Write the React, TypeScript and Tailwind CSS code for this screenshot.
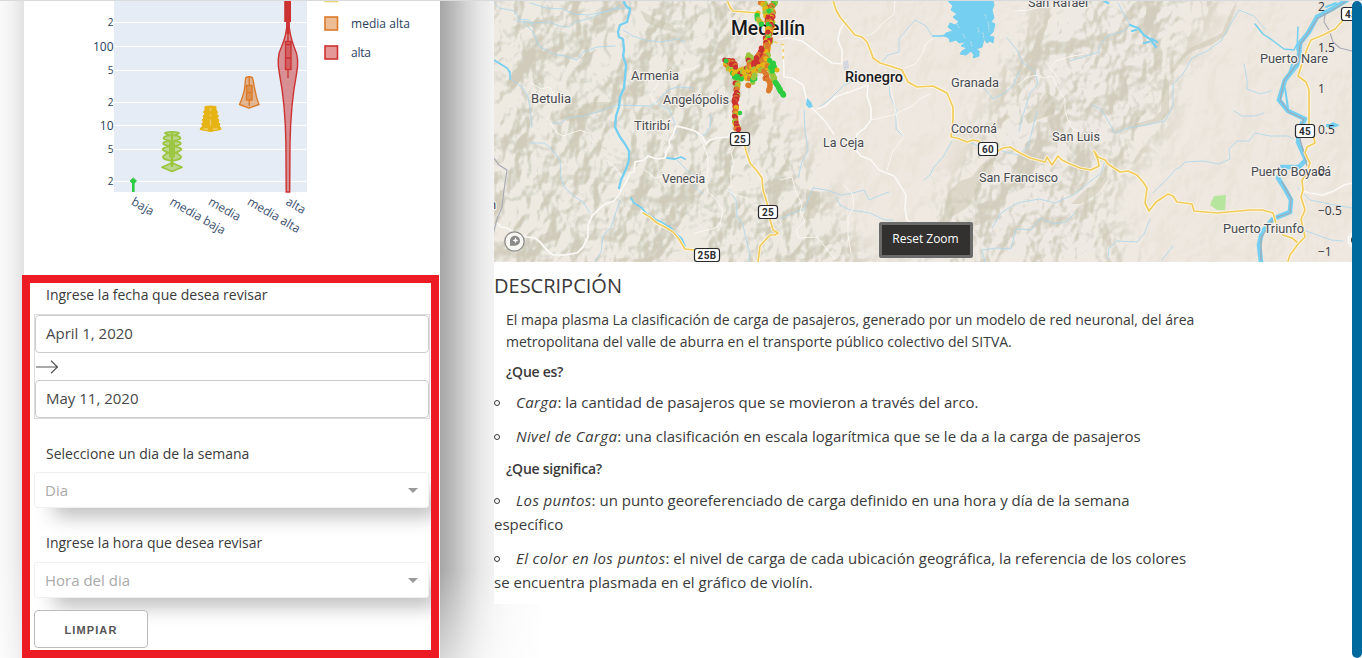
import React from "react";

const PALETTE = ["#2ecc40", "#9bc53d", "#e7b416", "#db7b2b", "#cc3232"];

function random(seed: number) {
  let s = seed;
  return () => {
    s = (s * 16807) % 2147483647;
    return s / 2147483647;
  };
}

type Stop = { x: number; y: number; color: string; r: number };

function scatter(path: number[][], spread: number, step: number, weights: number[], seed: number): Stop[] {
  const next = random(seed * 7919);
  next();
  const out: Stop[] = [];
  for (let i = 0; i < path.length - 1; i++) {
    const [x0, y0] = path[i];
    const [x1, y1] = path[i + 1];
    const n = Math.max(1, Math.round(Math.hypot(x1 - x0, y1 - y0) / step));
    for (let k = 0; k < n; k++) {
      const t = k / n;
      out.push({
        x: x0 + (x1 - x0) * t + (next() - 0.5) * spread,
        y: y0 + (y1 - y0) * t + (next() - 0.5) * spread,
        color: PALETTE[weights[Math.floor(next() * weights.length)]],
        r: 2.6,
      });
    }
  }
  return out;
}

const STOPS: Stop[] = [
  ...scatter([[763, 1], [768, 10], [770, 24], [768, 42], [764, 55], [757, 66]], 6, 0.9, [2, 4, 3, 2, 1], 31),
  ...scatter([[774, 1], [771, 16], [769, 34], [767, 48]], 4, 0.9, [1, 3, 0, 4, 2], 87),
  ...scatter([[757, 14], [757, 19], [763, 25]], 2, 1.5, [1, 2, 0], 91),
  ...scatter([[768, 45], [767, 56], [760, 66]], 5, 0.9, [3, 2, 3, 1], 51),
  ...scatter([[762, 49], [754, 64]], 2, 1.2, [4, 4, 3], 11),
  ...scatter([[728, 62], [733, 69], [738, 76], [749, 76], [757, 67]], 6, 0.5, [2, 1, 3, 0, 2], 71),
  ...scatter([[726, 60], [731, 61], [736, 67]], 3, 0.8, [4, 4, 4, 3], 65),
  ...scatter([[739, 72], [746, 70], [752, 70]], 5, 0.7, [2, 2, 1, 4], 66),
  ...scatter([[749, 56], [750, 65], [758, 65], [768, 68]], 5, 0.7, [1, 2, 3, 4], 23),
  ...scatter([[753, 72], [763, 68], [772, 65]], 5, 0.7, [3, 2, 1, 2], 35),
  ...scatter([[736, 80], [737, 91], [735, 101], [736, 113], [736, 122], [738, 130]], 3, 0.9, [3, 2, 4, 3, 4, 1], 18),
  ...scatter([[765, 72], [766, 78], [770, 83]], 3, 1.2, [3, 3, 4], 88),
  ...scatter([[770, 84], [769, 92]], 1, 1.4, [3], 89),
  ...scatter([[754, 81], [754, 74]], 3, 1.2, [0, 0, 1], 14),
  ...scatter([[749, 86], [746, 84]], 1, 1.5, [3, 3], 8),
  ...scatter([[770, 69], [775, 82]], 2, 1.3, [1], 12),
  ...scatter([[771, 62], [774, 70]], 5, 0.8, [0], 5),
  ...scatter([[775, 82], [784, 96]], 1, 1, [0], 6),
  { x: 777, y: 70, color: "#e7b416", r: 2.5 },
  { x: 737, y: 77, color: "#2ecc40", r: 3.2 },
  { x: 726, y: 61, color: "#2ecc40", r: 2.4 },
  { x: 740, y: 113, color: "#2ecc40", r: 2.2 },
  { x: 769, y: 11, color: "#2ecc40", r: 2.4 },
  { x: 768, y: 17, color: "#cc3232", r: 2.4 },
  { x: 768, y: 32, color: "#cc3232", r: 2.4 },
];

const TOWNS: [string, number, number, number][] = [
  ["Armenia", 631, 80, 48],
  ["Betulia", 531, 103, 40],
  ["Angelópolis", 663, 104, 66],
  ["Titiribí", 634, 130, 36],
  ["Venecia", 662, 183, 43],
  ["La Ceja", 823, 147, 41],
  ["Granada", 951, 87, 48],
  ["Cocorná", 951, 133, 46],
  ["San Francisco", 979, 182, 79],
  ["San Luis", 1052, 141, 48],
  ["San Rafael", 1028, 7, 60],
  ["Puerto Nare", 1260, 63, 68],
  ["Puerto Boyacá", 1251, 176, 80],
  ["Puerto Triunfo", 1223, 233, 81],
];

const SHIELDS: [string, number, number, number][] = [
  ["25", 730, 132, 20],
  ["25", 758, 205, 20],
  ["25B", 694, 248, 26],
  ["60", 978, 142, 20],
  ["45", 1295, 124, 20],
  ["45", 1341, 7, 20],
];

const AXIS: [string, number][] = [
  ["2", 11],
  ["1.5", 52],
  ["1", 93],
  ["0.5", 134],
  ["0", 175],
  ["−0.5", 215],
  ["−1", 256],
];

function Road({ d, main = false }: { d: string; main?: boolean }) {
  return (
    <>
      <path d={d} stroke={main ? "#fff8e6" : "#f1ece5"} strokeWidth={main ? 3.2 : 2} />
      <path d={d} stroke={main ? "#f1cc5c" : "#fdfcfa"} strokeWidth={main ? 1.7 : 1.2} />
    </>
  );
}

const MINOR_ROADS = [
  "M497 223l4 4 6 1 6 4 14 5 8 1 5 4 7 8 6 5 12 0 12-2 6-6 5-10 0-12 4-9 7-7 6-5 9-3 6-8",
  "M620 192l6-10 4-9 4-1 1-10 9-2 4-4 9 3 8-1 2-8 3-3 -1-6 4-6 3-9 9 2 10 3 7 5 4 8 4-4 6-2 12-1 4-6 8-1",
  "M783 44l1 33 8 1 11 7 4 16 5 7 12 12 10 14",
  "M780 39l10-1 12 3 20 15 10 7 10 1 0-14 -4-10 2-10 6-10",
  "M817 109l8-3 10-9 20-7 13-5",
  "M868 85l-1 11 4 12 0 12 -6 8 -8 6 -3 14 7 8 10 4 8 10 10 4 5 2 6 9 6 10 -1 13 2 12 10 6 10 7",
  "M1301 190l8 3 14 2 11-4 10-6 8-2",
];

const TRACKS = [
  "M697 132l6 12 5 13 0 14 -2 10 2 11 8 7 7 12 -3 13 -5 4 -12 3 -8 2",
  "M547 118l5 7 5 8 6 3 9-3 8-3 8 3 5 10",
  "M606 160l8 6 6 8 5 5",
  "M735 145l-4 8 3 10 -3 10 0 14 -4 3 8 5 12 3",
  "M871 120l14-3 12-3 4-3 10-4 9-8 10-5",
  "M905 68l10-4 8-11 2-8 7-6 9-4 18 7",
  "M885 70l5 15 5 23 4 20 5 9 -11 14 -6 19",
  "M867 36l8-4 8-9 11-9 1-13",
  "M1018 85l8-7 10-3 8 3 8-2 4 8 5 10 4 5 0 12 3 9 4 8 8 4",
  "M1060 80l-10-12 6-7 12-4 16-3",
  "M780 180l12-3 4 15 6 12 -2 8 5 9 -9 9 3 8 18-1 8 10 10 12",
  "M843 185l9 8 2 14 -6 10 0 18 3 18",
  "M1015 11l14-1 12-3 7-5",
  "M645 170l10 8 8-2",
  "M531 83l10 6 8-2 6 9",
  "M659 78l-2 8 -7 8 6 10",
  "M676 75l8-5 8-1 8-4",
];

const STREAMS = [
  "M494 2l5 6 16 3 4 8 10 1 5 8",
  "M516 21l20 2 12-1 12 4 9 1 6-5 16-4 12-6 12-3 16-1",
  "M530 3l16 5 17 1 11 5 14 1 20-4 12-5",
  "M523 22l10 10 6 14 14 8 12 2 12 4 6-8 14-5 18-1",
  "M623 30l10 6 12 4 15 2 18-3 7 3",
  "M494 60l13 8 5 12 11 8 5 9 2 11 2 19",
  "M553 123l8 0 6-5 16-2 18-5 16-6 34 1 6-4 11-12 9-3 16 1",
  "M530 143l14 0 7 5 9 12 1 18 4 10 10 9 8 5 7 11",
  "M659 105l10 4 6 15 1 9",
  "M711 115l-1 12 -5 8 -8 0",
  "M620 200l-5 15 -4 12 -8 9 -2 16 -6 9",
  "M677 160l10 10 10 8 -3 8 9 8",
  "M729 190l7 10 1 17 6 8 3 14 4 15 -2 8",
  "M817 109l12-9 15-15 10-4",
  "M881 63l7-8 11-3 0-13 9-11 7-8 11 6 7 11 14-1",
  "M888 72l2 24 6 13 0 20 8 8",
  "M804 110l1 20 3 20 -6 12 -4 16",
  "M780 219l17-8 7-1 9-22 14 2 14 5 12-2 11-3 5 10 12-5 8-3",
  "M836 197l4 8 10 5 20 3 15 7 9 0",
  "M973 85l11 3 9 11 10-5 10-8 6-15",
  "M952 135l24 10 22 5 20 5 10-8 5-20 4-16",
  "M952 141l-9 16 -9 10 -4 8 -6 5",
  "M1007 38l10 12 6 13 12 8 3 13 -8 9 -7 22 -4 16",
  "M1105 161l-4 12 -10 8 -16 13 -20 9 -16-4 -22 4 -16 10 -9 15",
  "M1115 133l13-5 17-3 20-4 8-15 0-22 10-10 9-16 15-7 14-10 9-16 9-15 15 6 11 13",
  "M1178 169l7-7 18-1 16 3 11-5 -1-10 8-8 12 0 6-8 15 3 18 0 5 3",
  "M1244 64l3 16 0 9 13 5 11-3",
  "M1234 111l8 5 12 0 10-3",
  "M1150 219l-6 15 -7 8 -20-1 -8 7 -1 11",
  "M1153 193l15-15 9-10",
  "M985 262l-3-12 14-2 15 1 5-20 15 1 9-12 14 6 12-2 10-10",
  "M1118 3l12 22 -6 6 -17 5 -8 11 0 5 -29 9",
  "M1298 188l12 12 20 4 22 4",
  "M1300 229l12 4 19 7 12 1",
  "M1162 260l11-14",
  "M1092 105l9 4 10 17 3 7",
];

function RegionMap() {
  return (
    <svg className="block shrink-0" width="858" height="262" viewBox="494 0 858 262" fill="none" strokeLinejoin="round" strokeLinecap="round">
      <defs>
        <filter id="relief" x="0" y="0" width="100%" height="100%" colorInterpolationFilters="sRGB">
          <feTurbulence type="fractalNoise" baseFrequency="0.026 0.02" numOctaves="4" seed="14" result="n" />
          <feDiffuseLighting in="n" surfaceScale="19" diffuseConstant="1.12" lightingColor="#ffffff">
            <feDistantLight azimuth="225" elevation="54" />
          </feDiffuseLighting>
          <feComponentTransfer>
            <feFuncR type="discrete" tableValues="0.80 0.80 0.80 0.81 0.82 0.835 0.85 0.875 0.90 0.935" />
            <feFuncG type="discrete" tableValues="0.78 0.78 0.78 0.79 0.80 0.82 0.838 0.865 0.888 0.915" />
            <feFuncB type="discrete" tableValues="0.71 0.71 0.71 0.72 0.74 0.76 0.79 0.825 0.85 0.885" />
          </feComponentTransfer>
        </filter>
        <filter id="soft" x="-20%" y="-20%" width="140%" height="140%">
          <feGaussianBlur stdDeviation="12" />
        </filter>
        <mask id="hills" maskUnits="userSpaceOnUse" x="494" y="0" width="858" height="262">
          <rect x="494" y="0" width="858" height="262" fill="#202020" />
          <g filter="url(#soft)">
            <path d="M480-20H760L740 60L790 120L830 200L880 280H480Z" fill="#e0e0e0" />
            <path d="M900 280L950 190L985 120L1010 50L1060-20H1235L1180 60L1165 130L1110 200L1140 280Z" fill="#d0d0d0" />
          </g>
        </mask>
      </defs>
      <rect x="494" y="0" width="858" height="262" fill="#efe9e1" />
      <g mask="url(#hills)">
        <rect x="494" y="0" width="858" height="262" filter="url(#relief)" />
      </g>

      <g fill="#c9c5b0" fillOpacity="0.5">
        <path d="M1165 72l4 12 0 28 -6 8 -14 5 -16 3 -12 6 14-10 18-5 8-8 1-20z" />
        <path d="M1168 75l8-12 12-14 20-9 14-7 9-22 6-9 -4 14 -6 18 -14 10 -20 7 -10 8 -8 12z" />
        <path d="M982 164l14-7 -6 18 -12 14 -10 18 -16 10 -10 16 2-22 4-18 12-12 12-4z" />
        <path d="M806 190l14 2 0 14 -6 12 -12 2 4-14z" />
        <path d="M1106 165l2 14 -10 14 -18 11 -9 0 12-12 12-8z" />
        <path d="M1046 92l12 8 -4 14 -12 4 -14 6 -4-8 12-10z" />
        <path d="M560 118l16-8 16-8 20 0 -4 8 -18 4 -20 8z" />
        <path d="M640 10l14 8 16 6 8 8 -14-2 -18-8z" />
      </g>

      <g stroke="#a9d7ee" strokeWidth="0.8">
        {STREAMS.map((d) => (
          <path key={d} d={d} />
        ))}
      </g>
      <g stroke="#faf7f3" strokeWidth="0.9">
        {TRACKS.map((d) => (
          <path key={d} d={d} />
        ))}
      </g>
      {MINOR_ROADS.map((d) => (
        <Road key={d} d={d} />
      ))}

      <g stroke="#75cff0">
        <path strokeWidth="2.3" d="M624 2l2 4 4 3 -1 5 -2 8 -7 3 -2 7 1 5 4 2 1 11 -1 6 3 9 -1 13 -1 10 -4 9 -1 10 -3 9 -1 11 5 10 5 7 4 7 0 9 -3 9 -5 11 -2 8" />
        <path strokeWidth="1.8" d="M631 198l3 5 8 5 4 5 9 6 8 4 5 4M669 226l5 6 8 7 3 7M667 158l8 1 6-2 4 2" />
        <path strokeWidth="1.5" d="M494 60l13 8 3 4 0 7M933 36l7 0 8-1M1255 24l8 10 9 6 12 9 10 1 3-6M1298 27l-1 23" />
        <path strokeWidth="2.2" d="M1130 25l8 3 6 7 6 4 6 8M1136 30l-4 1M1149 42l-5 1M1152 39l5 3M1104 1l4 2" />
      </g>
      <path
        d="M948 1L953 6 951 10 957 14 953 17 959 22 955 25 950 23 948 27 953 31 946 33 944 36 949 38 950 42 956 40 959 43 966 42 961 46 967 48 962 51 960 54 966 55 971 51 974 55 973 58 979 56 979 51 976 49 982 47 984 39 987 43 990 41 993 43 994 37 989 36 993 32 995 24 991 22 994 18 992 10 994 5 993 1Z"
        fill="#75cff0"
        stroke="#75cff0"
        strokeWidth="1"
      />
      <path d="M957 24l3 5M983 33l1 6M988 22l1 9M971 42l1 4M963 34l2 4M978 28l1 5M985 15l1 3" stroke="#efe9e1" strokeWidth="0.7" strokeDasharray="1 2" />
      <path d="M807 98l4 4 2 5 -4 1 -3-3z" fill="#75cff0" />
      <path d="M1326 124l4 0 3-2 4 2 3 1 -4 2 -5 1 -5-1z" fill="#75cff0" />
      <path d="M843 62l5-2 1 8 -5 3z" fill="#d4d6e0" />
      <path d="M1214 196L1226 195 1225 210 1217 210 1210 205Z" fill="#b6e59e" />

      <path d="M1347 0L1332 9 1317 17 1309 32 1300 43 1299 55 1297 65 1285 80 1279 100 1288 111 1305 119 1300 128 1298 142 1306 160 1299 167 1282 167 1278 178 1285 189 1291 200 1290 212 1273 219 1262 232 1259 245 1261 262" stroke="#75cff0" strokeWidth="4.6" strokeLinejoin="miter" />
      <path d="M1336 3l-10 4M1312 24l-5 8M1285 88l3 20M1294 58l-5 16M1301 122l-3 10" stroke="#75cff0" strokeWidth="2" />
      <path d="M1345 2L1333 10 1318 18 1306 36 1300 45 1298 62 1284 81 1280 100 1289 112 1304 119 1298 132 1303 150 1307 166M1282 182l9 16 -1 15 -16 5 -13 20 0 22" stroke="#a2a8b4" strokeWidth="1.2" />
      <path d="M1325 14l-1 8 5 8 4 12 7 6 12 3M494 158l5 7 8 5 -3 20 -2 17 -5 12 -3 12" stroke="#a9a9b5" strokeWidth="1.1" />

      <Road main d="M833 0L836 10 840 17 855 35 862 37 867 42 871 52 873 58 880 63 890 66 902 70 908 82 917 87 933 86 947 93 953 107 953 120 951 137 957 138 967 142 973 140 979 141 985 149 998 151 1003 148 1010 147 1020 153 1030 158 1045 162 1047 157 1052 165 1058 156 1062 160 1068 163 1080 168 1091 170 1099 166 1098 160 1094 151 1098 157 1105 160 1108 164 1120 172 1128 171 1137 175 1143 182 1147 188 1145 203 1149 211 1156 202 1162 198 1168 194 1173 196 1177 202 1192 204 1194 211 1217 213 1250 210 1262 210 1273 213 1277 227 1283 235 1292 238 1298 243" />
      <Road main d="M1345 18L1335 29 1323 35 1311 40 1307 49 1298 76 1306 82 1309 90 1309 123 1313 134 1315 143 1307 147 1305 153 1310 163 1306 175 1302 180 1303 190 1301 197 1305 210 1301 219 1305 237 1298 244 1290 255 1288 261" />
      <Road main d="M727 0L730 7 733 11 745 12 757 13" />
      <Road main d="M744 140L746 151 750 163 757 171 762 178 763 190 767 203 768 212 773 230 778 233 775 235 770 235 760 246 758 262" />
      <Road main d="M643 213L650 217 657 223 665 227 673 232 679 239 685 249 694 250" />
      <path d="M775 42l9 3 -1 8 0 10" stroke="#f1cc5c" strokeDasharray="2 5" strokeWidth="1.5" />

      <g fill="#484b52" stroke="#f6f2ec" strokeWidth="2.4" paintOrder="stroke" fontFamily="Roboto, 'Liberation Sans', sans-serif" fontSize="13">
        {TOWNS.map(([name, x, y, w]) => (
          <text key={name} x={x} y={y} textLength={w} lengthAdjust="spacingAndGlyphs">
            {name}
          </text>
        ))}
        <text x="489" y="209">n</text>
        <g fill="#17191d" fontWeight="500">
          <text x="845" y="82" fontSize="14" textLength="58" lengthAdjust="spacingAndGlyphs">Rionegro</text>
          <text x="731" y="35" fontSize="20" textLength="74" lengthAdjust="spacingAndGlyphs">Medellín</text>
        </g>
      </g>

      {SHIELDS.map(([label, x, y, w]) => (
        <g key={`${x}-${y}`}>
          <rect x={x + 0.5} y={y + 0.5} width={w - 1} height="13" rx="2.5" fill="#fff" stroke="#26282d" strokeWidth="1.2" />
          <text x={x + w / 2} y={y + 10.6} textAnchor="middle" fontFamily="Roboto, sans-serif" fontWeight="700" fontSize="10" letterSpacing="0.3" fill="#2c2e33">
            {label}
          </text>
        </g>
      ))}

      {STOPS.map((p, i) => (
        <circle key={i} cx={p.x} cy={p.y} r={p.r} fill={p.color} />
      ))}

      <g fill="#33373d" fontFamily="'Open Sans', sans-serif" fontSize="12">
        {AXIS.map(([t, y]) => (
          <text key={t} x="1318" y={y}>
            {t}
          </text>
        ))}
      </g>

      <circle cx="514.5" cy="241.5" r="9.7" fill="#f7f6f3" stroke="#8c8c8a" strokeWidth="1.3" />
      <path d="M510 245.800V240.500a5 5 0 1 1 5 5.300z" fill="#8a8a88" />
      <path d="M515.500 237.500l.9 2 2 .9 -2 .9 -.9 2 -.9-2 -2-.9 2-.9z" fill="#fff" />
      <circle cx="1356" cy="240" r="9" fill="#f8f6f3" />
      <circle cx="1355" cy="240" r="4" fill="#333" />
    </svg>
  );
}

const GRID: [number, string, boolean][] = [
  [22.5, "2", false],
  [46.5, "100", true],
  [70.5, "5", false],
  [102.5, "2", false],
  [125.5, "10", true],
  [149.5, "5", false],
  [181.5, "2", false],
];

const CATEGORIES: [string, number][] = [
  ["baja", 130.5],
  ["media baja", 169],
  ["media", 207.5],
  ["media alta", 246.5],
  ["alta", 285],
];

function ViolinChart() {
  return (
    <svg className="block shrink-0" width="416" height="275" viewBox="24 0 416 275" fontFamily="'Open Sans', sans-serif">
      <rect x="114" y="0" width="193" height="192" fill="#e5ecf6" />
      {GRID.map(([y, label, major]) => (
        <g key={y}>
          <path d={`M114 ${y}H307`} stroke="#fff" />
          <text x="113.5" y={major ? y + 4.5 : y + 3.5} textAnchor="end" fontSize={major ? 12 : 10} fill="#2a3f5f">
            {label}
          </text>
        </g>
      ))}
      {CATEGORIES.map(([name, x]) => (
        <text key={name} x={x} y="204" transform={`rotate(30 ${x} 204)`} fontSize="12" fill="#3d5170">
          {name}
        </text>
      ))}

      <path d="M133.300 181V192" stroke="#2ecc40" strokeWidth="2.6" />
      <path d="M133.300 178l3.200 3 -3.200 3 -3.200-3z" fill="#2ecc40" stroke="#2ecc40" strokeWidth="1" strokeLinejoin="round" />

      <g stroke="#9bc53d" strokeWidth="1.7" strokeLinejoin="round" fill="#9bc53d" fillOpacity="0.55">
        <path d="M165 132.800Q172 130.800 179 132.800Q179.500 134 174 135.300Q181 136.500 180.500 138.200Q180 139.800 174 140.800Q181.500 142 180.800 143.500Q180 145 174 146.200Q182 148 181.300 149.500Q180 151.500 175 152.800Q182 155.500 181 157.500Q180 159.500 172.500 160.800L172.500 163 182 167.300 172 171.500 162 167.300 171.500 163 171.500 160.800Q164 159.500 163 157.500Q162 155.500 169 152.800Q164 151.500 162.700 149.500Q162 148 170 146.200Q164 145 163.200 143.500Q162.500 142 170 140.800Q164 139.800 163.500 138.200Q163 136.500 170 135.300Q164.500 134 165 132.800Z" />
        <path d="M172 133V167" strokeWidth="2.4" />
        <path d="M169.500 142.500h5V157h-5z" fillOpacity="0.8" strokeWidth="1" />
      </g>

      <path d="M205 106.500Q210 105.500 216 106.500L216 110 217.500 112 216.700 114 218.500 116 217.300 118 219 120 218 122 220 124 219 126 220.500 127.500 221 129.500 210.500 131.500 200 129.500 201 127.500 203 126 201.500 124 203.500 122 202 120 204 118 203 116 205 114 203.500 112 205 110Z" fill="#e7b416" stroke="#e7b416" strokeLinejoin="round" />
      <path d="M210.500 108v3M210.500 114.500v2M210.500 119.500v6M203.500 129h4.500M213 129h4.500" stroke="#edcc66" strokeWidth="1.4" />

      <g stroke="#db7b2b" strokeWidth="1.4" strokeLinejoin="round" fill="#db7b2b" fillOpacity="0.5">
        <path d="M246 77.500Q249 76 252.300 77.500C253.500 80 253.500 84 255 90C256 96 257.500 101 259 104.500L249 108.200 239.500 104.500C241 101 243.500 95 244.500 89C245.500 83 245 80 246 77.500Z" />
        <path d="M246.500 85.500h5.500V100h-5.500zM246.500 92.500h5.500M249.300 77v8.500M249.300 100v6" fillOpacity="0.6" />
      </g>

      <g stroke="#cc3232" strokeWidth="1.4" fill="#cc3232">
        <path d="M287 22C287 32 285 39 281 48C277 56 277.500 64 279.500 74C283 92 285.500 112 285.900 144L286.200 192H289.700L290 144C290.500 112 293 92 296.500 74C298.500 64 298.500 56 294.500 48C291 39 289 32 289 22Z" fillOpacity="0.5" />
        <path d="M288 22V41M288 70V78" />
        <path d="M285.500 41.500h5.500V69.500h-5.500zM285.500 44.500h5.500M285.500 58h5.500" fillOpacity="0.5" />
        <rect x="284.2" y="0" width="6.8" height="22" stroke="none" />
        <rect x="286.5" y="20" width="3" height="14" stroke="none" />
      </g>

      <g strokeWidth="1.6" fontSize="12">
        <rect x="325" y="-11.5" width="12.5" height="13" fill="#f3da8a" stroke="#e7d680" />
        <rect x="325" y="17" width="12.5" height="13" fill="#edbd95" stroke="#db7b2b" />
        <rect x="325" y="46" width="12.5" height="13" fill="#e59898" stroke="#cc3232" />
      </g>
      <g fontSize="12" fill="#2a3f5f">
        <text x="351" y="28" textLength="59">media alta</text>
        <text x="351" y="57" textLength="20">alta</text>
      </g>
    </svg>
  );
}

function Dropdown({ placeholder }: { placeholder: string }) {
  return (
    <div className="ml-1 flex h-9 w-[395px] items-center justify-between rounded-[3px] border border-[#f0f0f0] bg-white pr-[10px] pl-[10px] shadow-[14px_14px_20px_-6px_rgba(0,0,0,0.28)]">
      <span className="pt-px text-[15px] text-[#aaaaaa]">{placeholder}</span>
      <span className="mt-px h-0 w-0 border-x-[5px] border-t-[5px] border-x-transparent border-t-[#999]" />
    </div>
  );
}

function Filters() {
  return (
    <section className="-ml-[2px] h-[383px] w-[417px] shrink-0 overflow-hidden border-8 border-[#ed1c24] bg-white text-sm text-[#3a3a3a]">
      <div className="flex h-[31px] items-center pb-[7px] pl-4">
        <span>Ingrese la fecha que desea revisar</span>
      </div>
      <div className="ml-1 flex h-[105px] w-[396px] flex-col justify-between border border-[#dcdcdc] text-[15px] text-[#484848]">
        <div className="flex h-[38px] items-center rounded border border-[#cacccd] pl-[10px]">April 1, 2020</div>
        <svg className="mt-px block" width="24" height="16" viewBox="0 0 24 16" fill="none" stroke="#555" strokeWidth="1.2">
          <path d="M1 8H22.500M16 1.800L22.500 8 16 14.200" />
        </svg>
        <div className="flex h-[38px] items-center rounded border border-[#cacccd] pl-[10px]">May 11, 2020</div>
      </div>
      <div className="flex h-[53px] items-center pt-[17px] pl-4">
        <span>Seleccione un dia de la semana</span>
      </div>
      <Dropdown placeholder="Dia" />
      <div className="flex h-[54px] items-center pt-[16px] pl-4">
        <span className="relative">Ingrese la hora que desea revisar</span>
      </div>
      <Dropdown placeholder="Hora del dia" />
      <button className="relative mt-3 ml-1 flex h-[38px] w-[114px] items-center justify-center rounded border border-[#bbb] bg-white pt-[3px] font-['Liberation_Sans',sans-serif] text-[11px] font-semibold tracking-[1.1px] text-[#555]">
        LIMPIAR
      </button>
    </section>
  );
}

function Item({ term, children }: { term: string; children: React.ReactNode }) {
  return (
    <li className="mb-[10px] text-[15px] leading-6">
      <span className="inline-flex w-[22px] items-center align-middle">
        <span className="-mt-px h-[6px] w-[6px] rounded-full border border-[#323232]" />
      </span>
      <em className="tracking-[0.38px]">{term}</em>: {children}
    </li>
  );
}

function Description() {
  return (
    <section className="h-[342px] w-[740px] shrink-0 bg-white text-[#3a3a3a]">
      <h2 className="flex h-[47px] items-center pt-px text-xl">DESCRIPCIÓN</h2>
      <p className="pl-3 text-sm leading-[22px] whitespace-nowrap">
        El mapa plasma La clasificación de carga de pasajeros, generado por un modelo de red neuronal, del área
        <br />
        metropolitana del valle de aburra en el transporte público colectivo del SITVA.
      </p>
      <h3 className="mt-2 pl-3 text-sm leading-[22px] font-semibold tracking-[-0.25px]">¿Que es?</h3>
      <ul className="mt-[7px] whitespace-nowrap">
        <Item term="Carga">la cantidad de pasajeros que se movieron a través del arco.</Item>
        <Item term="Nivel de Carga">una clasificación en escala logarítmica que se le da a la carga de pasajeros</Item>
      </ul>
      <h3 className="mt-[9px] pl-3 text-sm leading-[22px] font-semibold tracking-[-0.25px]">¿Que significa?</h3>
      <ul className="mt-2 whitespace-nowrap">
        <Item term="Los puntos">
          un punto georeferenciado de carga definido en una hora y día de la semana
          <br />
          específico
        </Item>
        <Item term="El color en los puntos">
          el nivel de carga de cada ubicación geográfica, la referencia de los colores
          <br />
          se encuentra plasmada en el gráfico de violín.
        </Item>
      </ul>
    </section>
  );
}

export default function App() {
  return (
    <div className="relative flex h-[658px] w-[1362px] overflow-hidden bg-white font-['Open_Sans',sans-serif]">
      <div className="w-6 shrink-0 bg-[linear-gradient(180deg,transparent_560px,rgba(255,255,255,0.35)_658px),linear-gradient(90deg,#fafafa_0px,#f2f2f2_12px,#e2e2e2_24px)]" />
      <aside className="flex w-[416px] shrink-0 flex-col bg-white">
        <ViolinChart />
        <Filters />
      </aside>
      <main className="flex w-[912px] shrink-0 flex-col bg-[linear-gradient(180deg,transparent_570px,rgba(255,255,255,0.55)_658px),linear-gradient(90deg,#a6a6a6_0px,#bcbcbc_14px,#d4d4d4_27px,#e7e7e7_40px,#f3f3f3_54px,#fafafa_75px,#fdfdfd_99px,#ffffff_100px)] pl-[54px]">
        <div className="relative h-[262px] w-[858px] shrink-0">
          <RegionMap />
          <button className="absolute top-[222px] left-[385px] flex h-9 w-[94px] items-center justify-center rounded-[2px] border-[3px] border-[#6b6b6b] bg-[#323130] pr-px pb-[2px] text-xs text-white">
            Reset Zoom
          </button>
        </div>
        <Description />
      </main>
      <div className="w-[10px] shrink-0 pt-px">
        <div className="h-[657px] rounded-full bg-[#006a9e]" />
      </div>
      <div className="absolute inset-x-0 top-0 h-px bg-[#d9dadd]" />
    </div>
  );
}
